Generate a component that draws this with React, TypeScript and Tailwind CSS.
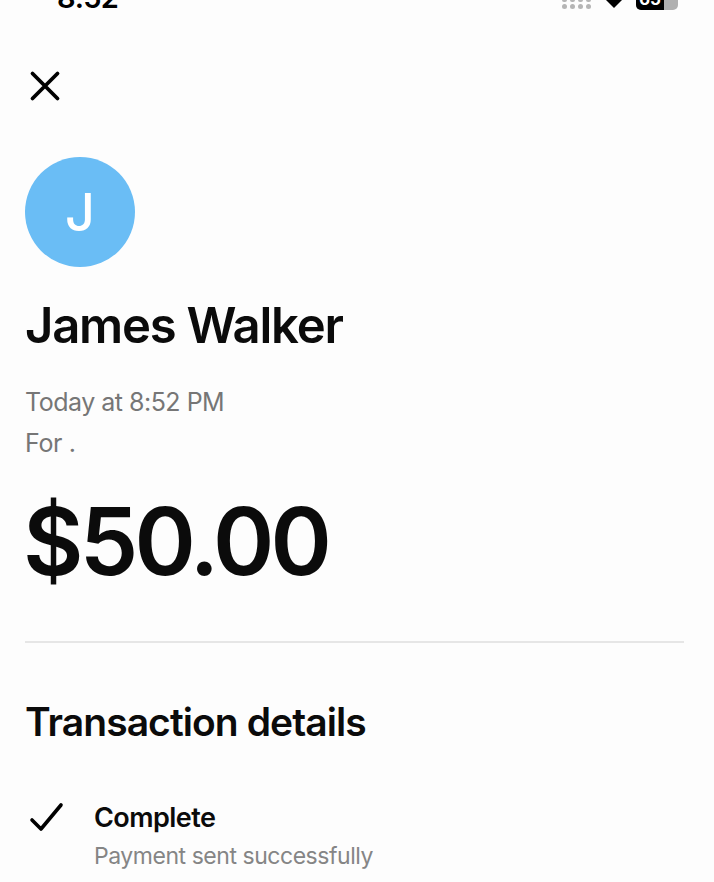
import React from 'react';

const StatusBar = () => (
  <div className="h-[10px] flex justify-between items-start overflow-hidden pl-[57px] pr-[36px]">
    <span className="font-semibold text-[29px] leading-[28px] text-black tracking-tight shrink-0 mt-[-16px]">8:52</span>
    <div className="flex items-start">
      <div className="flex flex-col gap-[2px] mr-[15px]">
        <div className="flex gap-[3px]">
          {[0, 1, 2, 3].map((i) => (
            <span key={i} className="w-[5px] h-[2px] rounded-b-full bg-[#b5b5b5]" />
          ))}
        </div>
        <div className="flex gap-[3px]">
          {[0, 1, 2, 3].map((i) => (
            <span key={i} className="w-[5px] h-[5px] rounded-full bg-[#b5b5b5]" />
          ))}
        </div>
      </div>
      <svg width="16" height="8" viewBox="0 0 16 8" className="mr-[14px] text-black">
        <path d="M0 0 L16 0 L8 8 Z" fill="currentColor" />
      </svg>
      <div className="w-[42px] h-[10px] rounded-b-[5px] bg-[#b0b0b0] overflow-hidden">
        <div className="w-[28px] h-full bg-black flex justify-center">
          <span className="text-white text-[17px] leading-[17px] font-bold mt-[-9px]">65</span>
        </div>
      </div>
    </div>
  </div>
);

export default function App() {
  return (
    <div className="w-[714px] h-[882px] bg-[#fdfdfd] overflow-hidden font-['Inter',_'Liberation_Sans',_sans-serif]">
      <StatusBar />
      <div className="pl-[25px] pr-[30px]">
        <svg width="32" height="32" viewBox="0 0 32 32" fill="none" className="mt-[60px] ml-[4px] text-black">
          <path d="M3.5 3.5 L28.5 28.5 M28.5 3.5 L3.5 28.5" stroke="currentColor" strokeWidth="3.8" strokeLinecap="round" />
        </svg>
        <div className="mt-[55px] w-[110px] h-[110px] rounded-full bg-[#6abdf5] flex items-center justify-center">
          <span className="text-white text-[52px] font-medium leading-none mt-[2px]">J</span>
        </div>
        <h1 className="mt-[31px] text-[49px] leading-[56px] font-semibold text-[#0b0b0b] tracking-[-0.025em]">James Walker</h1>
        <p className="mt-[31px] text-[25px] leading-[34px] text-[#767676] tracking-[-0.02em]">Today at 8:52 PM</p>
        <p className="mt-[7px] text-[25px] leading-[34px] text-[#767676] tracking-[-0.015em]">For .</p>
        <p className="mt-[31px] ml-[-2px] text-[93px] leading-[100px] font-semibold text-[#0b0b0b] tracking-[-0.04em]">$50.00</p>
        <div className="mt-[50px] h-[2px] bg-[#e6e6e6]" />
        <h2 className="mt-[56px] text-[39px] leading-[46px] font-semibold text-[#0b0b0b] tracking-[-0.024em]">Transaction details</h2>
        <div className="mt-[55px] flex gap-[29px]">
          <svg width="36" height="30" viewBox="0 0 36 30" fill="none" className="mt-[2px] ml-[4px] shrink-0 text-black">
            <path d="M3 18 L12 27 L32 3" stroke="currentColor" strokeWidth="3.6" strokeLinecap="round" strokeLinejoin="round" />
          </svg>
          <div>
            <p className="text-[27px] leading-[36px] font-semibold text-[#0b0b0b] tracking-[-0.02em]">Complete</p>
            <p className="mt-[4px] text-[23px] leading-[32px] text-[#858585] tracking-[-0.02em]">Payment sent successfully</p>
          </div>
        </div>
      </div>
    </div>
  );
}
